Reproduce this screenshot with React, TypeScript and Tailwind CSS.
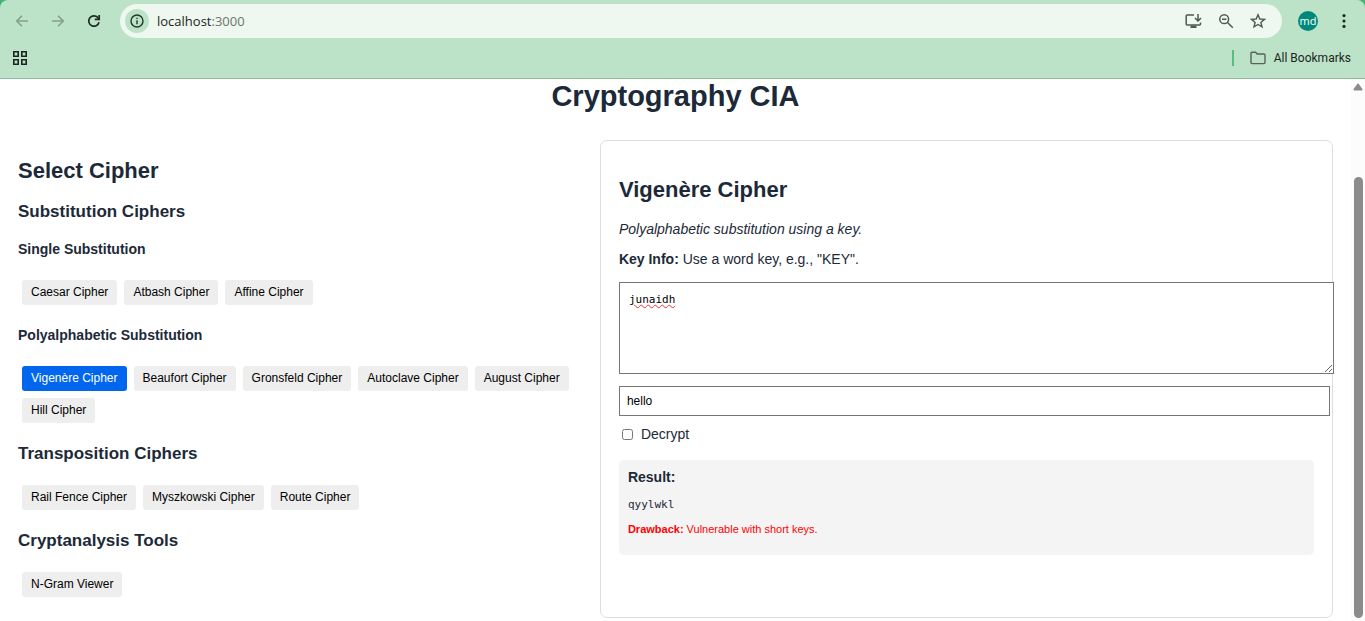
import { useState } from "react";

const single = ["Caesar Cipher", "Atbash Cipher", "Affine Cipher"];
const poly = [
  "Vigenère Cipher",
  "Beaufort Cipher",
  "Gronsfeld Cipher",
  "Autoclave Cipher",
  "August Cipher",
  "Hill Cipher",
];
const transposition = ["Rail Fence Cipher", "Myszkowski Cipher", "Route Cipher"];
const tools = ["N-Gram Viewer"];

function BrowserBar() {
  return (
    <div className="bg-[#3fb573] font-['Open_Sans','Noto_Sans',sans-serif]">
      <header className="rounded-t-lg border-b border-[#8fb79b] bg-[#bce3c8]">
        <div className="flex items-center pt-1">
          <nav className="flex w-[120px] items-center gap-5 pl-[14px] text-[#1f2a23]">
            <button aria-label="Back" className="text-[#84a08c]">
              <svg width="16" height="16" viewBox="0 0 16 16" fill="none" stroke="currentColor" strokeWidth="1.6">
                <path d="M14 8H3M8 2.7L2.7 8L8 13.3" />
              </svg>
            </button>
            <button aria-label="Forward" className="text-[#84a08c]">
              <svg width="16" height="16" viewBox="0 0 16 16" fill="none" stroke="currentColor" strokeWidth="1.6">
                <path d="M2 8H13M8 2.7L13.3 8L8 13.3" />
              </svg>
            </button>
            <button aria-label="Reload">
              <svg width="16" height="16" viewBox="0 0 16 16" fill="none" stroke="currentColor" strokeWidth="1.7">
                <path d="M13 9.2A5.2 5.2 0 1 1 11.7 4.4L13.2 6" />
                <path d="M13.2 2V6.4H8.8" />
              </svg>
            </button>
          </nav>
          <div className="flex h-[34px] flex-1 items-center rounded-full bg-[#eef7f0] pr-4 pl-[5px] text-[#4f5a53]">
            <button aria-label="Site information" className="flex size-6 items-center justify-center rounded-full bg-[#bce3c8] text-[#27352c]">
              <svg width="14" height="14" viewBox="0 0 14 14" fill="none" stroke="currentColor" strokeWidth="1.4">
                <circle cx="7" cy="7" r="6" />
                <path d="M7 6.2V10.2M7 3.7V5.1" />
              </svg>
            </button>
            <div className="flex-1 pt-px pl-2 text-[13px] text-[#6d756f]">
              <span className="text-[#1c2620]">localhost</span>:3000
            </div>
            <div className="flex items-center gap-4">
              <button aria-label="Install app">
                <svg width="17" height="16" viewBox="0 0 17 16" fill="none" stroke="currentColor" strokeWidth="1.5">
                  <path d="M9 2H2.2Q1.2 2 1.2 3V11Q1.2 12 2.2 12H14.5Q15.5 12 15.5 11V9.5M13 1V7.6M10 5L13 8L16 5" />
                  <path d="M5.5 13.8H11.5" strokeWidth="2.4" />
                </svg>
              </button>
              <button aria-label="Zoom">
                <svg width="16" height="16" viewBox="0 0 16 16" fill="none" stroke="currentColor" strokeWidth="1.5">
                  <circle cx="6.2" cy="6.2" r="4.4" />
                  <path d="M9.5 9.5L14.8 14.8M4 6.2H8.4" />
                </svg>
              </button>
              <button aria-label="Bookmark this tab">
                <svg width="16" height="16" viewBox="0 0 16 16" fill="none" stroke="currentColor" strokeWidth="1.4">
                  <path d="M8 1.8L9.8 6L14.4 6.4L10.9 9.4L12 13.9L8 11.5L4 13.9L5.1 9.4L1.6 6.4L6.2 6Z" />
                </svg>
              </button>
            </div>
          </div>
          <button className="ml-4 flex size-5 items-center justify-center rounded-full bg-[#00897b] pb-0.5 text-[11px] leading-none text-white">
            md
          </button>
          <button aria-label="Menu" className="mr-[13px] ml-[18px]">
            <svg width="16" height="16" viewBox="0 0 16 16" fill="#1f2a23">
              <circle cx="8" cy="2.6" r="1.6" />
              <circle cx="8" cy="8" r="1.6" />
              <circle cx="8" cy="13.4" r="1.6" />
            </svg>
          </button>
        </div>
        <div className="flex h-10 items-center justify-between pr-[14px] pl-3 text-[#1c2620]">
          <button aria-label="Apps">
            <svg width="16" height="16" viewBox="0 0 16 16" fill="none" stroke="currentColor" strokeWidth="1.6">
              <path d="M1.8 1.8H6.2V6.2H1.8ZM9.8 1.8H14.2V6.2H9.8ZM1.8 9.8H6.2V14.2H1.8ZM9.8 9.8H14.2V14.2H9.8Z" />
            </svg>
          </button>
          <div className="flex items-center">
            <span className="h-4 w-0.5 bg-[#57be82]" />
            <button className="flex items-center gap-2 pl-4 font-[Roboto,sans-serif] text-[12px] leading-4">
              <svg width="16" height="14" viewBox="0 0 16 14" fill="none" stroke="#56635a" strokeWidth="1.4">
                <path d="M1 2.3Q1 1.3 2 1.3H5.6L7.2 3H14Q15 3 15 4V11.6Q15 12.6 14 12.6H2Q1 12.6 1 11.6Z" />
              </svg>
              All Bookmarks
            </button>
          </div>
        </div>
      </header>
    </div>
  );
}

type ListProps = { items: string[]; active: string; onSelect: (name: string) => void };

function CipherList({ items, active, onSelect }: ListProps) {
  return (
    <div className="flex flex-wrap gap-[7px] px-1">
      {items.map((name) => (
        <button
          key={name}
          onClick={() => onSelect(name)}
          className={
            name === active
              ? "h-[25px] rounded-[3px] bg-[#0066ee] px-[9px] pb-0.5 text-[12px] text-white"
              : "h-[25px] rounded-[3px] bg-[#eeeeee] px-[9px] pb-0.5 text-[12px] text-black"
          }
        >
          {name}
        </button>
      ))}
    </div>
  );
}

export default function App() {
  const [active, setActive] = useState("Vigenère Cipher");
  const [text, setText] = useState("junaidh");
  const [key, setKey] = useState("hello");
  const [decrypt, setDecrypt] = useState(false);
  const list = { active, onSelect: setActive };

  return (
    <div className="flex min-h-screen flex-col bg-white font-['Liberation_Sans',Arial,sans-serif] text-[#1c2938]">
      <BrowserBar />
      <div className="flex flex-1">
        <main className="flex-1 px-[18px] pb-[3px]">
          <h1 className="text-center text-[29px] leading-[34px] font-bold">Cryptography CIA</h1>
          <div className="mt-[27px] grid grid-cols-[1fr_1.3fr] gap-[18px]">
            <section className="pt-[19px] pb-[21px]">
              <h2 className="text-[22px] leading-6 font-bold">Select Cipher</h2>
              <h3 className="mt-[19px] text-[17px] leading-5 font-bold">Substitution Ciphers</h3>
              <h4 className="mt-[19px] mb-[23px] text-[14px] leading-4 font-bold">Single Substitution</h4>
              <CipherList items={single} {...list} />
              <h4 className="mt-[22px] mb-[23px] text-[14px] leading-4 font-bold">Polyalphabetic Substitution</h4>
              <CipherList items={poly} {...list} />
              <h3 className="mt-[21px] mb-[21px] text-[17px] leading-5 font-bold">Transposition Ciphers</h3>
              <CipherList items={transposition} {...list} />
              <h3 className="mt-[21px] mb-[21px] text-[17px] leading-5 font-bold">Cryptanalysis Tools</h3>
              <CipherList items={tools} {...list} />
            </section>

            <section className="rounded-[7px] border border-[#dddddd] px-[18px] pt-[37px] pb-4">
              <h2 className="text-[22px] leading-6 font-bold">{active}</h2>
              <p className="mt-[19px] text-[14px] leading-4 italic">Polyalphabetic substitution using a key.</p>
              <p className="mt-[14px] text-[14px] leading-4">
                <strong>Key Info:</strong> Use a word key, e.g., "KEY".
              </p>
              <textarea
                aria-label="Text"
                spellCheck={false}
                value={text}
                onChange={(e) => setText(e.target.value)}
                className="mt-[15px] block h-[92px] w-[calc(100%+20px)] resize border border-[#767676] bg-white p-[9px] font-['DejaVu_Sans_Mono',monospace] text-[11px] leading-4 text-black underline decoration-[#ee3333] decoration-wavy decoration-1"
              />
              <input
                aria-label="Key"
                type="text"
                value={key}
                onChange={(e) => setKey(e.target.value)}
                className="mt-3 block h-[30px] w-[calc(100%+16px)] border border-[#767676] bg-white px-[7px] text-[12px] text-black"
              />
              <label className="mt-[10px] flex items-center gap-2 pl-[3px] text-[14px] leading-4">
                <input
                  type="checkbox"
                  checked={decrypt}
                  onChange={(e) => setDecrypt(e.target.checked)}
                  className="size-[11px]"
                />
                Decrypt
              </label>
              <div className="mt-[18px] rounded-[5px] bg-[#f4f4f4] px-[9px] pt-[9px] pb-[19px]">
                <h4 className="text-[14px] leading-4 font-bold">Result:</h4>
                <pre className="mt-[13px] font-['DejaVu_Sans_Mono',monospace] text-[11px] leading-[14px]">qyylwkl</pre>
                <p className="mt-[10px] text-[11px] leading-[14px] text-[#ff0000]">
                  <strong>Drawback:</strong> Vulnerable with short keys.
                </p>
              </div>
            </section>
          </div>
        </main>
        <div aria-hidden="true" className="flex w-[14px] flex-col items-center bg-[#fcfcfc] pb-[3px]">
          <svg className="mt-1" width="10" height="8" viewBox="0 0 10 8" fill="#8b8b8b">
            <path d="M4.2 1Q5 0 5.8 1L9.4 6Q9.8 7.5 8.6 7.5H1.4Q.2 7.5 .6 6Z" />
          </svg>
          <div className="mt-[86px] w-[9px] flex-1 rounded-full bg-[#8b8b8b]" />
        </div>
      </div>
    </div>
  );
}
